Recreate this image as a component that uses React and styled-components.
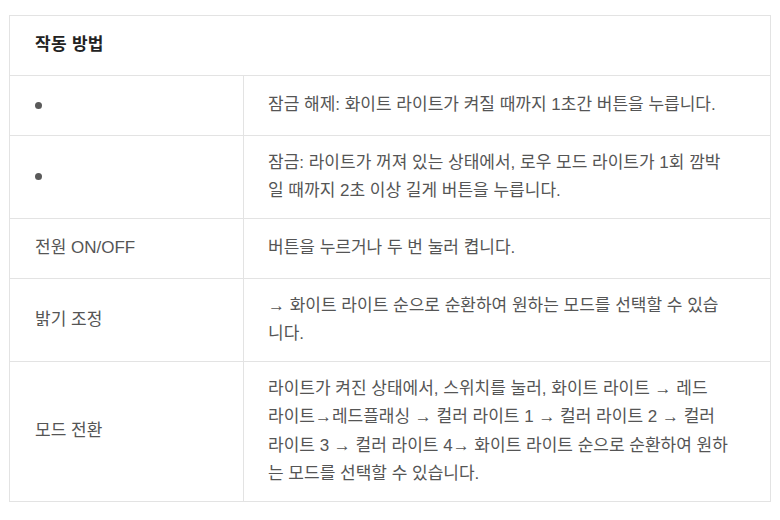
import React from "react";
import styled, { createGlobalStyle } from "styled-components";

const Global = createGlobalStyle`
  html, body { margin: 0; padding: 0; background: #fff; }
  body {
    font-family: "Liberation Sans", "Noto Sans CJK KR", Arial, sans-serif;
  }
`;

const Page = styled.div`
  padding: 15px 9px 0 9px;
`;

const Table = styled.table`
  width: 762px;
  table-layout: fixed;
  border-collapse: collapse;
  border: 1px solid #e3e3e3;
`;

const Row = styled.tr`
  height: 60px;
`;

const HeadCell = styled.th`
  text-align: left;
  padding: 12.5px 25px;
  font-size: 17px;
  font-weight: 700;
  letter-spacing: 0.3px;
  color: #222;
  line-height: 28.5px;
  border: 1px solid #e3e3e3;
`;

const Cell = styled.td`
  padding: 12.5px 20px 12.5px ${(p) => (p.$second ? 24 : 25)}px;
  font-size: 17px;
  line-height: 28.5px;
  color: #555;
  vertical-align: middle;
  word-break: keep-all;
  border: 1px solid #e3e3e3;
`;

const Dot = styled.span`
  display: inline-block;
  width: 7px;
  height: 7px;
  border-radius: 50%;
  background: #5a5a5a;
  vertical-align: middle;
  margin-top: -1px;
`;

const Lines = ({ lines }) =>
  lines.map((l, i) => (
    <React.Fragment key={i}>
      {i > 0 && <br />}
      {l}
    </React.Fragment>
  ));

const rows = [
  {
    label: <Dot aria-label="●" />,
    lines: ["잠금 해제: 화이트 라이트가 켜질 때까지 1초간 버튼을 누릅니다."],
  },
  {
    label: <Dot aria-label="●" />,
    lines: [
      "잠금: 라이트가 꺼져 있는 상태에서, 로우 모드 라이트가 1회 깜박",
      "일 때까지 2초 이상 길게 버튼을 누릅니다.",
    ],
  },
  { label: "전원 ON/OFF", lines: ["버튼을 누르거나 두 번 눌러 켭니다."] },
  {
    label: "밝기 조정",
    lines: ["→ 화이트 라이트 순으로 순환하여 원하는 모드를 선택할 수 있습", "니다."],
  },
  {
    label: "모드 전환",
    lines: [
      "라이트가 켜진 상태에서, 스위치를 눌러, 화이트 라이트 → 레드",
      "라이트→레드플래싱 → 컬러 라이트 1 → 컬러 라이트 2 → 컬러",
      "라이트 3 → 컬러 라이트 4→ 화이트 라이트 순으로 순환하여 원하",
      "는 모드를 선택할 수 있습니다.",
    ],
  },
];

export default function App() {
  return (
    <Page>
      <Global />
      <Table>
        <colgroup>
          <col style={{ width: "234px" }} />
          <col />
        </colgroup>
        <thead>
          <Row>
            <HeadCell colSpan={2}>작동 방법</HeadCell>
          </Row>
        </thead>
        <tbody>
          {rows.map((r, i) => (
            <Row key={i}>
              <Cell>{r.label}</Cell>
              <Cell $second>
                <Lines lines={r.lines} />
              </Cell>
            </Row>
          ))}
        </tbody>
      </Table>
    </Page>
  );
}
